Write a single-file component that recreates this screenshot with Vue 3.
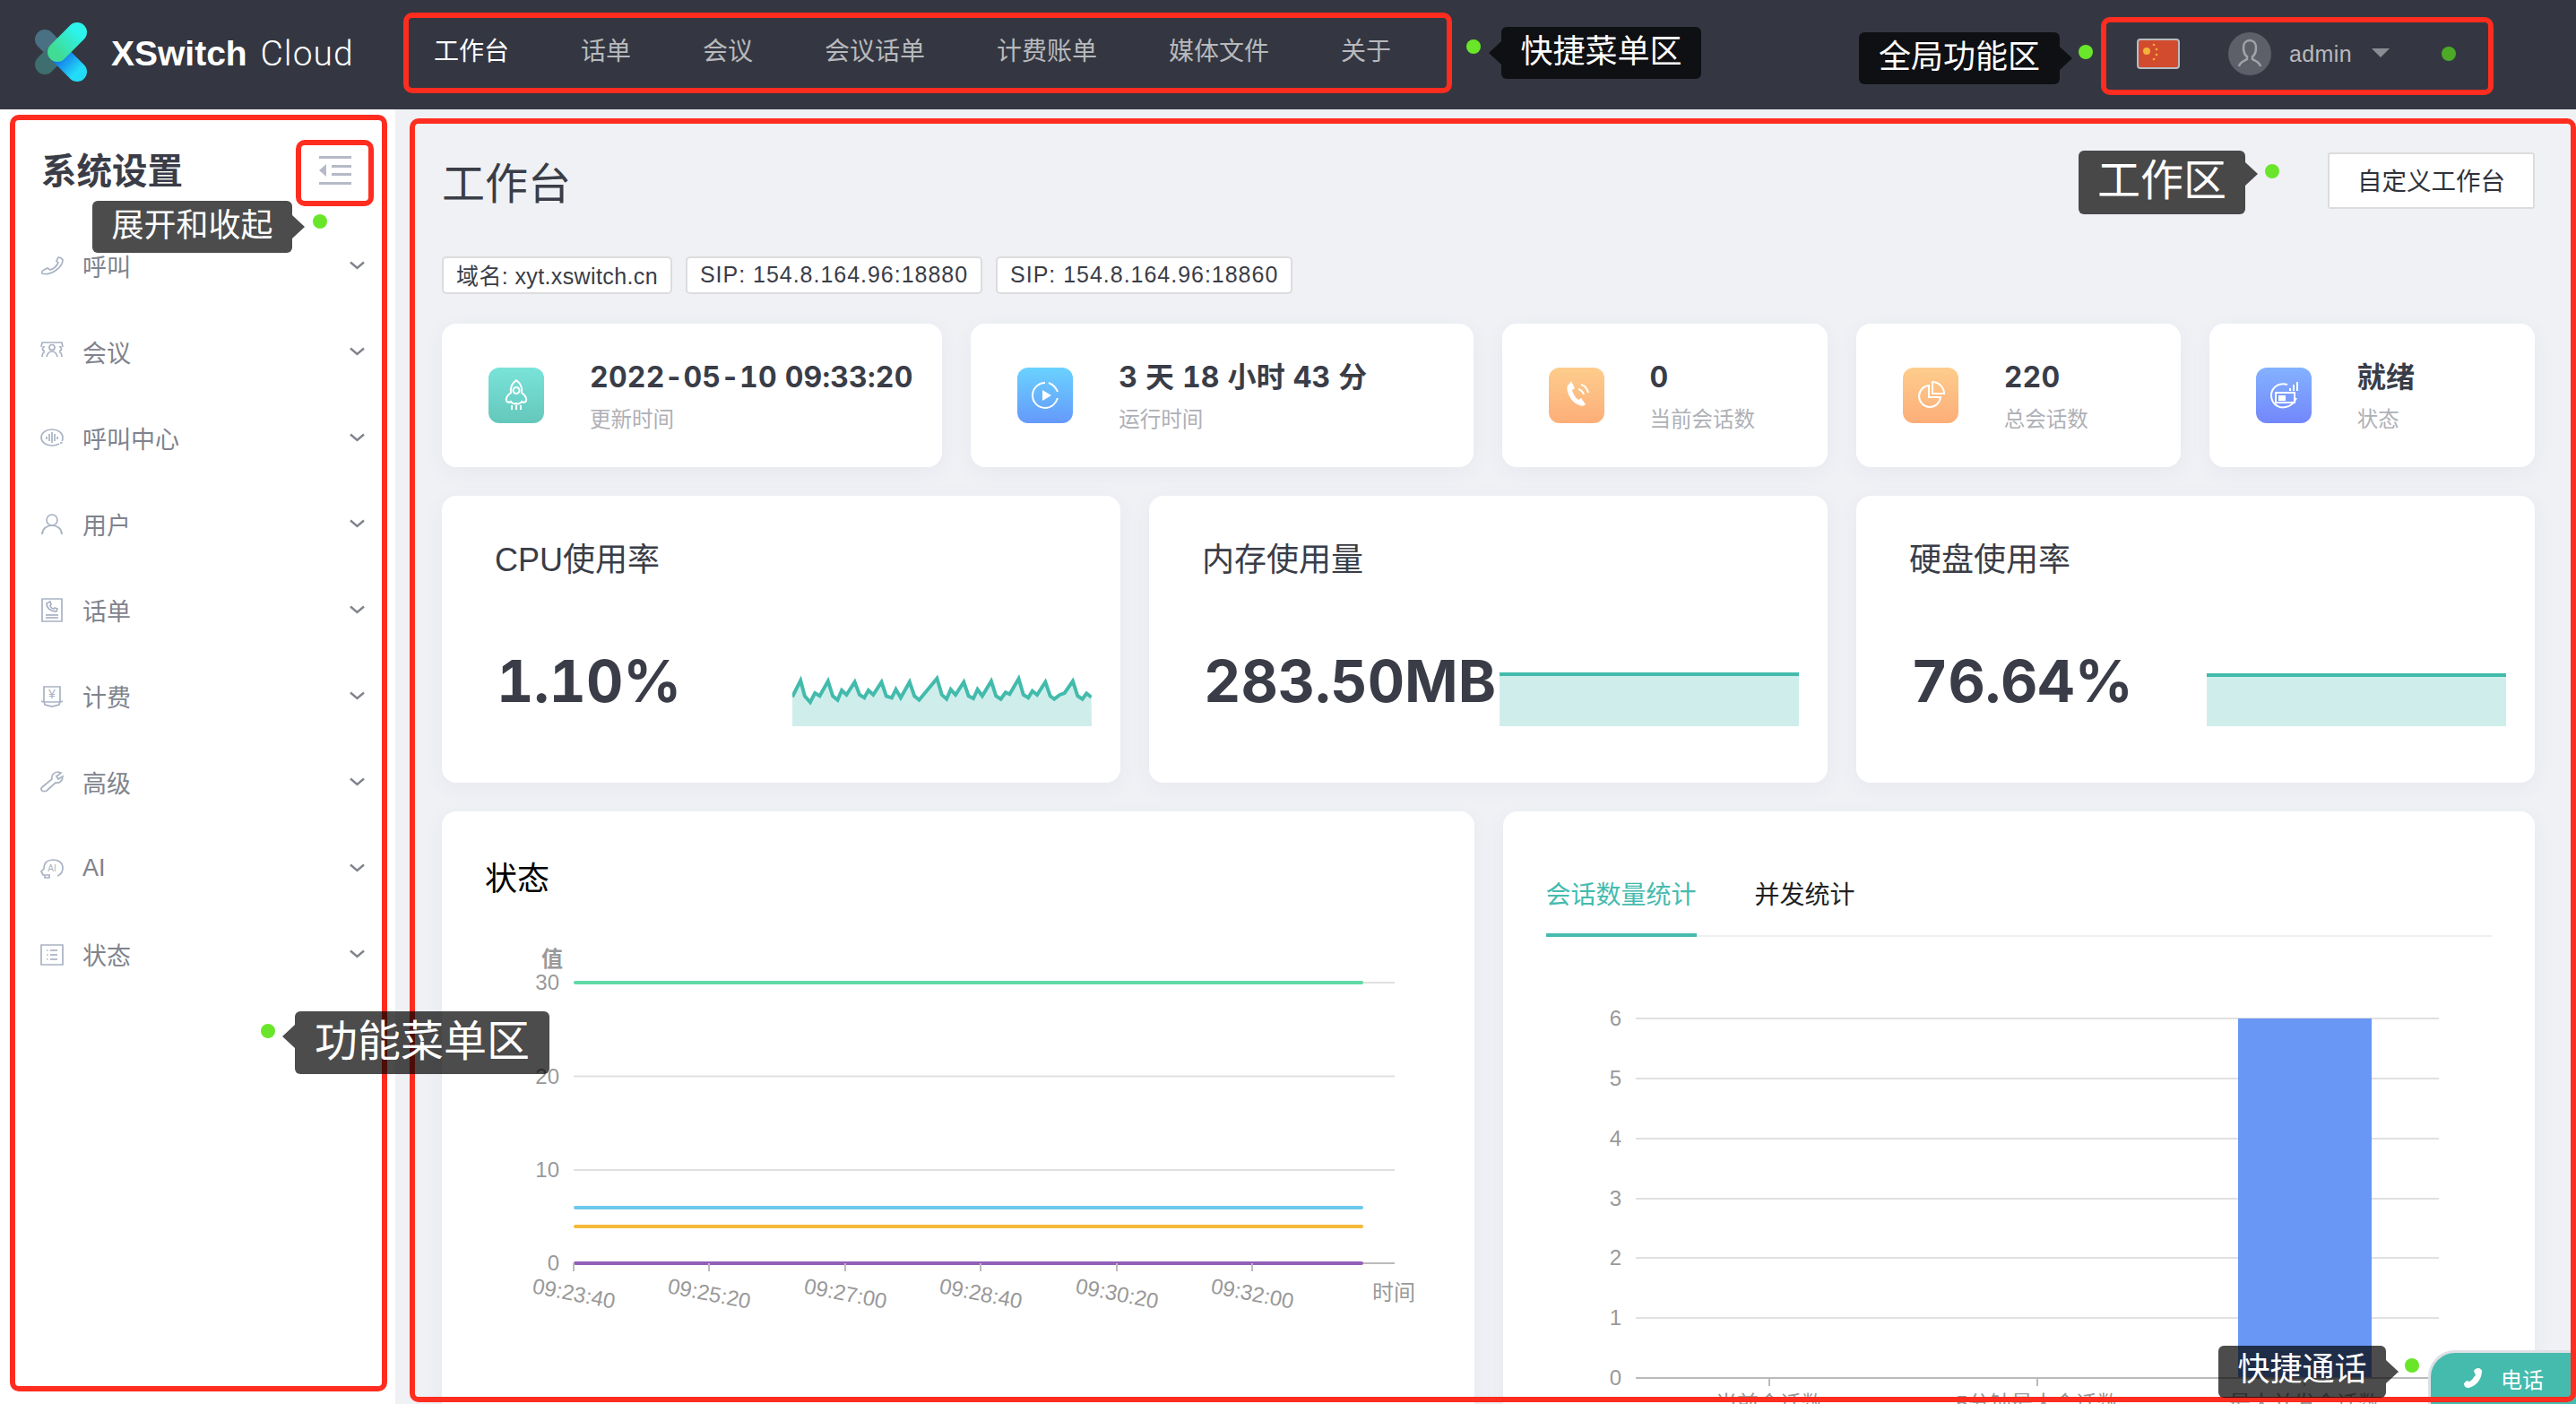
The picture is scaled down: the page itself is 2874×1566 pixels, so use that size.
<script setup>
const nav = ['工作台', '话单', '会议', '会议话单', '计费账单', '媒体文件', '关于']

const menu = [
  { label: '呼叫', paths: ['M2 22c-1-2 0-3 2-4l4-2 3 2c4-1 7-4 9-8l-2-2 2-4c2 0 4 1 5 3 0 4-3 8-7 11s-9 6-16 4z'] },
  { label: '会议', paths: ['M1 8 2 3h22l1 5', 'M13 5.500a3 3 0 1 1 0 6 3 3 0 0 1 0-6z', 'M7 19c1-4 3-6 6-6s5 2 6 6', 'M5 7.500a2.500 2.500 0 0 0 0 5', 'M21 7.500a2.500 2.500 0 0 1 0 5', 'M2 19c0-3 1-5 3-5', 'M24 19c0-3-1-5-3-5'] },
  { label: '呼叫中心', paths: ['M24 17c1-1 1-3 1-4 0-5-5-9-12-9S1 8 1 13s5 9 12 9c3 0 6-1 8-2', 'M7 12v3', 'M10 9v8', 'M13 7v12', 'M16 9v8', 'M19 12v3', 'M22 19h2.500'] },
  { label: '用户', paths: ['M13 3a6 6 0 1 1 0 12 6 6 0 0 1 0-12z', 'M2 25c0-6 5-10 11-10s11 4 11 10'] },
  { label: '话单', paths: ['M2 1h22v25H2z', 'M7 6c0 5 4 9 11 9l1-3-3-1-1 1c-2 0-4-2-4-4l1-1-1-3z', 'M6 19h14', 'M6 22h14'] },
  { label: '计费', paths: ['M4 3h18v17H4z', 'M1 19c4 1 4 4 4 4l8 2 8-2s0-3 4-4'], glyph: '¥' },
  { label: '高级', paths: ['M2 23c-2-2-1-3 0-4L13 10c-1-4 2-8 7-8l3 1-5 4 2 3 5-3c0 5-4 8-8 7L7 23c-2 1-3 1-5 0z'] },
  { label: 'AI', paths: ['M6 21h4v3H5v-3H3l-2-4 3-3c0-7 4-10 10-10s11 3 11 9-3 8-6 9'], glyph: 'AI', small: true },
  { label: '状态', paths: ['M1 3h24v22H1z', 'M11 9h8', 'M11 14h8', 'M11 19h8', 'M7 9h1.500', 'M7 14h1.500', 'M7 19h1.500'] }
]

const stats = [
  { value: '2022-05-10 09:33:20', label: '更新时间', tone: 'teal', paths: ['M31 14c-5 4-7 9-6 14-4 3-6 6-5 9 1 2 3 2 5 1 1 2 5 3 6 2 2 1 5 0 6-2 2 1 4 1 5-1 1-3-1-6-5-9 1-5-1-10-6-14z', 'M31 22a3.500 3.500 0 1 1 0 7 3.500 3.500 0 0 1 0-7z', 'M26 42v5', 'M31 42v5', 'M36 42v5'] },
  { value: '3 天 18 小时 43 分', label: '运行时间', tone: 'blue', paths: ['M31 17a14 14 0 1 0 0 28c7 0 12-5 14-11', 'M45 27c-2-5-5-8-10-10'], play: true },
  { value: '0', label: '当前会话数', tone: 'orange', phone: true },
  { value: '220', label: '总会话数', tone: 'orange', paths: ['M29 20a12 12 0 1 0 13 13H29z', 'M33 16v13h13c0-7-6-13-13-13z'] },
  { value: '就绪', label: '状态', tone: 'indigo', paths: ['M35 19c-9-3-18 3-18 12s8 15 16 13c6-1 10-5 12-10', 'M22 28h21v11H22z', 'M26 32h2v4h-2z', 'M30 32h2v4h-2z', 'M38 23v3', 'M42 19v7', 'M46 16v10'] }
]

const raw = [[540,715],[552,660],[558,712],[566,733],[573,702],[580,712],[592,662],[599,712],[606,725],[612,693],[619,708],[631,665],[638,708],[645,718],[651,693],[658,708],[670,665],[677,712],[685,718],[691,690],[698,718],[711,665],[718,712],[725,725],[751,653],[758,708],[765,722],[771,690],[778,708],[790,665],[797,712],[804,720],[810,690],[817,712],[830,662],[837,712],[844,722],[851,700],[857,706],[870,654],[877,708],[884,718],[890,695],[897,708],[909,665],[916,712],[922,722],[930,708],[937,702],[949,662],[956,712],[963,722],[969,703],[976,716]]
const spark = raw.map(([x, y]) => `${((x - 540) / 1.307).toFixed(1)},${(y / 3 + 540 - 751).toFixed(1)}`).join(' ')

const metrics = [
  { title: 'CPU使用率', value: '1.10%', line: spark },
  { title: '内存使用量', value: '283.50MB', line: '0,2 334,2' },
  { title: '硬盘使用率', value: '76.64%', line: '0,3 334,3' }
]

const lineGrid = [{ y: 1097, t: '30' }, { y: 1201.5, t: '20' }, { y: 1306, t: '10' }]
const lineSeries = [
  { y: 1097, c: '#5fd9a5' },
  { y: 1348, c: '#6dc8ec' },
  { y: 1369, c: '#f5b93a' },
  { y: 1410, c: '#945fb9' }
]
const lineTicks = [
  { x: 640, t: '09:23:40' },
  { x: 791, t: '09:25:20' },
  { x: 943, t: '09:27:00' },
  { x: 1094, t: '09:28:40' },
  { x: 1246, t: '09:30:20' },
  { x: 1397, t: '09:32:00' }
]

const barGrid = [
  { y: 1137, t: '6' },
  { y: 1204, t: '5' },
  { y: 1271, t: '4' },
  { y: 1338, t: '3' },
  { y: 1404, t: '2' },
  { y: 1471, t: '1' }
]
const barTicks = [
  { x: 1973, t: '当前会话数' },
  { x: 2272, t: '5分钟最大会话数' },
  { x: 2570, t: '最大并发会话数' }
]
</script>

<template>
  <div class="page">
    <header class="topbar">
      <svg class="logo" width="58" height="66" viewBox="39 25 58 66">
        <defs>
          <linearGradient id="lgA" x1="1" y1="0" x2="0" y2="1">
            <stop offset="0" stop-color="#2cf7ef" />
            <stop offset="1" stop-color="#41de93" />
          </linearGradient>
          <linearGradient id="lgB" x1="0" y1="0" x2="1" y2="1">
            <stop offset="0" stop-color="#1167ea" />
            <stop offset="1" stop-color="#22e0fb" />
          </linearGradient>
        </defs>
        <path class="cap" d="M50 44 68 62" stroke="#4a7186" />
        <path class="cap" d="M50 72 68 54" stroke="#3e6f70" />
        <path class="cap" d="M66 60 86 80" stroke="url(#lgB)" />
        <path class="cap" d="M86 36 64 58" stroke="url(#lgA)" />
      </svg>
      <div class="brand"><b>XSwitch</b> <span>Cloud</span></div>
      <nav class="nav">
        <a v-for="(n, i) in nav" :key="n" :class="{ on: i === 0 }">{{ n }}</a>
      </nav>
      <div class="global">
        <svg class="flag" width="48" height="34" viewBox="0 0 48 34">
          <rect x="1" y="1" width="46" height="32" rx="3" fill="#d24b2e" stroke="#b9bbc0" stroke-width="2" />
          <circle cx="11" cy="14" r="4" fill="#f3b13a" />
          <circle cx="19" cy="7" r="1.300" fill="#f3b13a" />
          <circle cx="22" cy="12" r="1.300" fill="#f3b13a" />
          <circle cx="22" cy="18" r="1.300" fill="#f3b13a" />
          <circle cx="19" cy="23" r="1.300" fill="#f3b13a" />
        </svg>
        <svg class="avatar" width="48" height="48" viewBox="0 0 48 48">
          <circle cx="24" cy="24" r="24" fill="#5d6069" />
          <path d="M24 9c4 0 7 3 7 8s-2 9-4 10v3c3 2 8 3 9 8M24 9c-4 0-7 3-7 8s2 9 4 10v3c-3 2-8 3-9 8" fill="none" stroke="#a0a3aa" stroke-width="2.500" />
        </svg>
        <span class="user">admin</span>
        <i class="tri"></i>
      </div>
    </header>

    <div class="body">
      <aside class="side">
        <div class="side-head">
          <h2>系统设置</h2>
          <svg class="fold" width="36" height="32" viewBox="0 0 36 32">
            <path d="M0 1.500h36M14 11.500h22M14 20.500h22M0 30.500h36" stroke="#b5bac6" stroke-width="3" />
            <path d="M0 16 8 9v14z" fill="#b5bac6" />
          </svg>
        </div>
        <div v-for="m in menu" :key="m.label" class="item">
          <svg class="ico" width="26" height="27" viewBox="0 0 26 27">
            <path v-for="p in m.paths" :key="p" :d="p" />
            <text v-if="m.glyph" x="13" :y="m.small ? 17 : 16" :class="m.small ? 'g-s' : 'g-l'">{{ m.glyph }}</text>
          </svg>
          <span>{{ m.label }}</span>
          <svg class="chev" width="17" height="10" viewBox="0 0 17 10">
            <path d="M1 1.500 8.500 8 16 1.500" />
          </svg>
        </div>
      </aside>

      <main class="main">
        <div class="head">
          <h1>工作台</h1>
          <button class="custom">自定义工作台</button>
        </div>
        <div class="tags">
          <span class="tag domain">域名: xyt.xswitch.cn</span>
          <span class="tag">SIP: 154.8.164.96:18880</span>
          <span class="tag">SIP: 154.8.164.96:18860</span>
        </div>

        <section class="stats">
          <div v-for="s in stats" :key="s.label" class="card stat">
            <div class="badge" :class="s.tone">
              <svg width="62" height="62" viewBox="0 0 62 62">
                <path v-for="p in s.paths" :key="p" :d="p" class="w" />
                <path v-if="s.play" d="M28 25 38 31 28 37z" fill="#fff" />
                <template v-if="s.phone">
                  <path d="M23 18c-3 2-3 5-2 9 2 7 7 13 13 15 3 1 5 1 7-1l-5-7-3 2c-3-2-6-7-7-11l3-2-4-8z" fill="#fff" />
                  <path class="w" d="M33 24c3 1 5 3 6 6M36 19c4 1 7 5 8 9" />
                </template>
              </svg>
            </div>
            <div class="stat-text">
              <div class="stat-v">{{ s.value }}</div>
              <div class="stat-l">{{ s.label }}</div>
            </div>
          </div>
        </section>

        <section class="metrics">
          <div v-for="m in metrics" :key="m.title" class="card metric">
            <div class="m-title">{{ m.title }}</div>
            <div class="m-row">
              <div class="m-value">{{ m.value }}</div>
              <svg class="m-chart" width="334" height="60" viewBox="0 0 334 60">
                <polygon :points="`0,60 ${m.line} 334,60`" fill="#cfeeeb" />
                <polyline :points="m.line" fill="none" stroke="#43bbac" stroke-width="4" />
              </svg>
            </div>
          </div>
        </section>

        <section class="charts">
          <div class="card chart">
            <div class="c-title">状态</div>
            <svg class="c-svg" width="1151" height="526" viewBox="493 1041 1151 526">
              <text x="628" y="1079" class="ax end strong">值</text>
              <g v-for="g in lineGrid" :key="g.t">
                <path :d="`M640 ${g.y}H1556`" class="grid" />
                <text x="624" :y="g.y + 8" class="ax end">{{ g.t }}</text>
              </g>
              <path d="M640 1410H1556" class="base" />
              <text x="624" y="1418" class="ax end">0</text>
              <path v-for="s in lineSeries" :key="s.c" :d="`M642 ${s.y}H1519`" :stroke="s.c" class="series" />
              <g v-for="t in lineTicks" :key="t.x">
                <path :d="`M${t.x} 1410v9`" class="base" />
                <text :x="t.x" y="1452" class="ax mid" :transform="`rotate(11 ${t.x} 1446)`">{{ t.t }}</text>
              </g>
              <text x="1555" y="1451" class="ax mid">时间</text>
            </svg>
          </div>

          <div class="card chart">
            <div class="tabs">
              <span class="tab on">会话数量统计</span>
              <span class="tab">并发统计</span>
            </div>
            <svg class="c-svg" width="1152" height="521" viewBox="1676 1046 1152 521">
              <g v-for="g in barGrid" :key="g.t">
                <path :d="`M1824 ${g.y}H2720`" class="grid" />
                <text x="1808" :y="g.y + 8" class="ax end">{{ g.t }}</text>
              </g>
              <rect x="2496" y="1137" width="149" height="401" fill="#6897f5" />
              <path d="M1824 1538H2720" class="base" />
              <text x="1808" y="1546" class="ax end">0</text>
              <g v-for="t in barTicks" :key="t.x">
                <path :d="`M${t.x} 1538v9`" class="base" />
                <text :x="t.x" y="1575" class="ax mid">{{ t.t }}</text>
              </g>
            </svg>
          </div>
        </section>
      </main>
    </div>

    <button class="call">
      <svg width="24" height="24" viewBox="0 0 24 24">
        <path d="M18 1c-2 0-4 1-5 3l2 5-2 2c-1 2-3 4-5 5l-3-1-3 3c0 3 2 5 5 5 9-2 15-10 15-19 0-1-2-3-4-3z" fill="#fff" />
      </svg>
      <span>电话</span>
    </button>

    <i class="red r-nav"></i>
    <i class="red r-global"></i>
    <i class="red r-side"></i>
    <i class="red r-fold"></i>
    <i class="red r-main"></i>

    <div class="tip t-nav left">快捷菜单区</div>
    <div class="tip t-global right">全局功能区</div>
    <div class="tip t-fold right">展开和收起</div>
    <div class="tip t-work right">工作区</div>
    <div class="tip t-menu left">功能菜单区</div>
    <div class="tip t-call right">快捷通话</div>

    <i class="dot d-nav"></i>
    <i class="dot d-global"></i>
    <i class="dot d-inner"></i>
    <i class="dot d-fold"></i>
    <i class="dot d-work"></i>
    <i class="dot d-menu"></i>
    <i class="dot d-call"></i>
  </div>
</template>

<style>
html, body { margin: 0; background: #fff; }
</style>

<style scoped>
.page {
  position: relative;
  width: 2874px;
  height: 1566px;
  overflow: hidden;
  font-family: "Liberation Sans", "Noto Sans CJK SC", sans-serif;
  color: #3a3d47;
}

.topbar {
  display: flex;
  align-items: center;
  height: 116px;
  padding: 0 0 6px 39px;
  background: #343741;
}
.cap { fill: none; stroke-width: 22; stroke-linecap: round; opacity: 0.98; }
.brand {
  margin-left: 27px;
  margin-top: 3px;
  width: 269px;
  font-size: 39px;
  color: #fff;
  white-space: nowrap;
}
.brand b { font-weight: 700; }
.brand span { font-family: Roboto, "Liberation Sans", sans-serif; font-weight: 300; letter-spacing: 1px; margin-left: 4px; }
.nav { display: flex; gap: 80px; margin-left: 91px; font-size: 28px; color: #b8b9bd; margin-top: -7px; }
.nav .on { color: #fff; }
.global { display: flex; align-items: center; margin-left: auto; padding-right: 208px; margin-top: 4px; }
.flag { margin-right: 54px; }
.avatar { margin-right: 20px; }
.user { font-size: 25px; letter-spacing: .4px; color: #b8b9bd; margin-right: 22px; }
.tri { width: 0; height: 0; border-left: 10px solid transparent; border-right: 10px solid transparent; border-top: 10px solid #8b8d94; margin-top: -2px; }

.body { display: flex; height: 1444px; }

.side { width: 441px; flex: none; background: #fff; }
.side-head { display: flex; justify-content: space-between; height: 77px; padding: 49px 49px 0 46px; }
.side-head h2 { margin: 0; font-size: 39.5px; line-height: 40px; font-weight: 700; }
.fold { margin-top: 3px; }
.item { display: flex; align-items: center; height: 96px; padding: 0 34px 0 45px; font-size: 27px; color: #80838d; }
.ico { margin-right: 21px; fill: none; stroke: #a9b2c3; stroke-width: 1.7; flex: none; }
.ico text { fill: #a9b2c3; stroke: none; text-anchor: middle; }
.g-l { font-size: 14px; }
.g-s { font-size: 10px; }
.chev { margin-left: auto; fill: none; stroke: #80838d; stroke-width: 2.4; }

.main { flex: 1; min-width: 0; background: #f0f1f5; padding: 48px 46px 0 52px; overflow: hidden; }
.head { display: flex; justify-content: space-between; align-items: center; height: 63px; }
.head h1 { margin: -2px 0 0; font-size: 48px; font-weight: 400; }
.custom {
  width: 231px;
  height: 63px;
  padding: 0 0 3px;
  background: #fff;
  border: 2px solid #dcdcdf;
  border-radius: 3px;
  font: inherit;
  font-size: 27.5px;
  color: #30323a;
}
.tags { display: flex; gap: 15px; margin: 53px 0 33px; }
.tag {
  display: flex;
  align-items: center;
  height: 42px;
  box-sizing: border-box;
  padding: 0 14px 2px;
  background: #fff;
  border: 2px solid #dcdcdf;
  border-radius: 5px;
  font-size: 25px;
  letter-spacing: .98px;
  color: #3a3d47;
  white-space: nowrap;
}
.tag.domain { letter-spacing: .38px; }

.card { background: #fff; border-radius: 16px; box-shadow: 0 6px 24px rgba(60, 70, 110, .05); }

.stats { display: grid; grid-template-columns: 558fr 560fr 363fr 362fr 363fr; gap: 32px; height: 160px; }
.stat { display: flex; align-items: center; padding-left: 52px; }
.badge { width: 62px; height: 62px; flex: none; border-radius: 12px; margin-right: 51px; }
.badge svg { display: block; }
.w { fill: none; stroke: #fff; stroke-width: 2; }
.teal { background: linear-gradient(#7ae3d9, #64c7bb); }
.blue { background: linear-gradient(#6ad2ff, #6599fb); }
.orange { background: linear-gradient(#fdcd8c, #fdae78); }
.indigo { background: linear-gradient(#84b2ff, #7287fb); }
.stat-v { font-family: Inter, "Noto Sans CJK SC", sans-serif; font-size: 32px; line-height: 42px; font-weight: 700; font-variant-numeric: tabular-nums; letter-spacing: .2px; white-space: nowrap; }
.stat-l { margin-top: 11px; font-size: 23.5px; line-height: 30px; color: #aeb0b6; }

.metrics { display: grid; grid-template-columns: repeat(3, 1fr); gap: 32px; margin-top: 32px; height: 320px; }
.metric { padding: 50px 32px 0 59px; }
.m-title { font-size: 36px; line-height: 44px; }
.m-row { display: flex; justify-content: space-between; margin-top: 73px; height: 90px; }
.m-value { font-family: Inter, "Liberation Sans", sans-serif; font-size: 64px; line-height: 80px; font-weight: 700; font-variant-numeric: tabular-nums; margin-left: 2px; white-space: nowrap; }
.m-chart { align-self: flex-end; flex: none; display: block; }

.charts { display: grid; grid-template-columns: 1fr 1fr; gap: 32px; margin-top: 32px; height: 700px; }
.chart { overflow: hidden; }
.c-title { height: 135px; box-sizing: border-box; padding: 56px 0 0 48px; font-size: 36px; line-height: 40px; color: #000; }
.c-svg { display: block; }
.grid { stroke: #e0e0e0; stroke-width: 2; fill: none; }
.base { stroke: #bbb; stroke-width: 2; fill: none; }
.series { stroke-width: 4; stroke-linecap: round; fill: none; }
.ax { font-size: 24px; fill: #999; }
.end { text-anchor: end; }
.mid { text-anchor: middle; }
.strong { font-weight: 700; }

.tabs { display: flex; gap: 65px; margin: 60px 48px 0; height: 80px; border-bottom: 2px solid #eeeff2; box-sizing: border-box; }
.tab { height: 80px; box-sizing: border-box; font-size: 28px; line-height: 68px; color: #222; }
.tab.on { color: #45bbae; border-bottom: 4px solid #45bbae; }

.call {
  position: absolute;
  right: -4px;
  bottom: -4px;
  display: flex;
  align-items: center;
  box-sizing: border-box;
  width: 169px;
  height: 64px;
  padding: 0 0 2px 35px;
  background: #45bbae;
  border: 3px solid #dfe0e5;
  border-radius: 30px 0 0 0;
  color: #fff;
  font: inherit;
  font-size: 24px;
}
.call span { margin-left: 19px; }

.red { position: absolute; box-sizing: border-box; border: 6px solid #ff2d20; border-radius: 10px; }
.r-nav { left: 450px; top: 14px; width: 1170px; height: 90px; }
.r-global { left: 2344px; top: 19px; width: 438px; height: 87px; }
.r-side { left: 11px; top: 128px; width: 421px; height: 1424px; }
.r-fold { left: 330px; top: 156px; width: 87px; height: 74px; }
.r-main { left: 457px; top: 132px; width: 2417px; height: 1432px; }

.tip {
  position: absolute;
  box-sizing: border-box;
  display: flex;
  align-items: center;
  justify-content: center;
  padding-bottom: 10px;
  background: rgba(0, 0, 0, .7);
  border-radius: 6px;
  color: #fff;
  font-size: 36px;
  white-space: nowrap;
}
.tip::after { content: ""; position: absolute; top: 50%; width: 0; height: 0; margin-top: -13px; border-top: 13px solid transparent; border-bottom: 13px solid transparent; }
.tip.left::after { left: -14px; border-right: 14px solid rgba(0, 0, 0, .7); }
.tip.right::after { right: -14px; border-left: 14px solid rgba(0, 0, 0, .7); }
.t-nav { left: 1675px; top: 30px; width: 223px; height: 58px; }
.t-global { left: 2074px; top: 36px; width: 224px; height: 58px; }
.t-fold { left: 103px; top: 224px; width: 223px; height: 58px; }
.t-work { left: 2319px; top: 168px; width: 186px; height: 71px; font-size: 48px; padding-bottom: 13px; }
.t-work::after { margin-top: -23px; }
.t-menu { left: 329px; top: 1128px; width: 284px; height: 70px; font-size: 48px; padding-bottom: 13px; }
.t-menu::after { margin-top: -20px; }
.t-call { left: 2475px; top: 1501px; width: 187px; height: 58px; padding-bottom: 13px; }

.dot { position: absolute; width: 16px; height: 16px; border-radius: 50%; background: #6ae62a; }
.d-nav { left: 1636px; top: 44px; }
.d-global { left: 2319px; top: 50px; }
.d-inner { left: 2724px; top: 52px; background: #4caa27; }
.d-fold { left: 349px; top: 239px; }
.d-work { left: 2527px; top: 183px; }
.d-menu { left: 291px; top: 1142px; }
.d-call { left: 2683px; top: 1515px; }
</style>
